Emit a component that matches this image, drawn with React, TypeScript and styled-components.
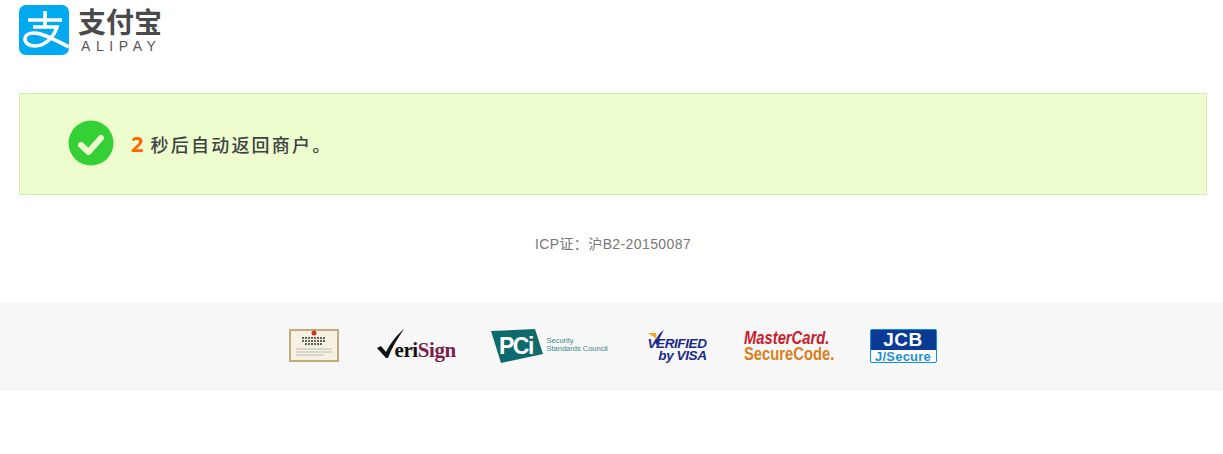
import { FC } from 'react'
import styled, { createGlobalStyle } from 'styled-components'

const GlobalStyle = createGlobalStyle`
  html, body {
    margin: 0;
    padding: 0;
    background: #fff;
    font-family: "Liberation Sans", "Noto Sans CJK SC", sans-serif;
  }
`

const Page = styled.div`
  width: 1223px;
  height: 454px;
  overflow: hidden;
`

const Header = styled.header`
  display: flex;
  align-items: flex-start;
  gap: 9px;
  height: 93px;
  padding: 5px 0 0 19px;
  box-sizing: border-box;
`

const Wordmark = styled.div`
  display: flex;
  flex-direction: column;
  width: 86px;
  color: #4a4a4a;
`

const WordmarkCn = styled.span`
  font-family: "Noto Sans CJK SC", sans-serif;
  font-size: 28px;
  font-weight: 700;
  line-height: 30px;
  margin-top: 1px;
`

const WordmarkEn = styled.span`
  font-family: "Liberation Sans", sans-serif;
  font-size: 14px;
  line-height: 14px;
  letter-spacing: 5.6px;
  margin-top: 3px;
  padding-left: 3px;
  white-space: nowrap;
  color: #555;
`

const Notice = styled.section`
  display: flex;
  align-items: center;
  height: 102px;
  margin: 0 16px 0 19px;
  padding: 0 0 2px 48px;
  box-sizing: border-box;
  background: #edfdcd;
  border: 1px solid #d7e8b4;
`

const NoticeText = styled.p`
  margin: 0 0 0 17px;
  font-family: "Noto Sans CJK SC", serif;
  font-size: 18px;
  font-weight: 500;
  letter-spacing: 2.2px;
  color: #3e4246;
`

const Countdown = styled.strong`
  font-family: "Open Sans", sans-serif;
  font-size: 22px;
  font-weight: 700;
  letter-spacing: 0;
  color: #ff6600;
  margin-right: 7px;
`

const Icp = styled.div`
  height: 108px;
  padding: 40px 0 0 3px;
  box-sizing: border-box;
  text-align: center;
  font-size: 14px;
  line-height: 18px;
  letter-spacing: 0.4px;
  color: #777;
`

const Footer = styled.footer`
  display: flex;
  align-items: center;
  justify-content: center;
  gap: 37px;
  height: 88px;
  padding: 0 0 3px 2px;
  box-sizing: border-box;
  background: #f7f7f7;
`

const Badge = styled.div<{ $w: number }>`
  position: relative;
  flex: none;
  width: ${p => p.$w}px;
  height: 36px;
  display: flex;
  align-items: center;
`

const VeriSignText = styled.span`
  font-family: "Liberation Serif", serif;
  font-size: 21px;
  font-weight: 700;
  letter-spacing: -0.4px;
  color: #111;
  padding-left: 18px;
  padding-top: 9px;
  b {
    font-weight: 700;
    color: #7a1f4a;
  }
`

const PciBlock = styled.div`
  display: flex;
  align-items: center;
  gap: 2px;
  margin-left: -1px;
`

const PciText = styled.span`
  font-size: 7.5px;
  line-height: 8.5px;
  color: #3a8a8e;
  white-space: nowrap;
  margin-top: -1px;
`

const VisaStack = styled.div`
  display: flex;
  flex-direction: column;
  align-items: flex-end;
  align-self: flex-start;
  width: 100%;
  font-weight: 700;
  font-style: italic;
  color: #1a2a8c;
  font-size: 13.5px;
  line-height: 12px;
  letter-spacing: -0.4px;
  padding-top: 10px;
`

const McStack = styled.div`
  display: flex;
  flex-direction: column;
  width: 100%;
  font-weight: 700;
  font-size: 18px;
  line-height: 16px;
  white-space: nowrap;
  transform: scaleX(0.82);
  transform-origin: left center;
`

const McTop = styled.span`
  color: #c8202c;
  font-style: italic;
`

const McBottom = styled.span`
  color: #d8801c;
`

const JcbCard = styled.div`
  display: flex;
  flex-direction: column;
  width: 67px;
  height: 34px;
  box-sizing: border-box;
  border: 1px solid #0d8fdc;
  border-radius: 2px;
  background: #fff;
  font-weight: 700;
  text-align: center;
`

const JcbTop = styled.span`
  height: 20px;
  background: #0a3a96;
  color: #fff;
  font-size: 19px;
  letter-spacing: 0.5px;
  line-height: 20px;
`

const JcbBottom = styled.span`
  color: #1b8fd8;
  font-size: 13px;
  line-height: 13px;
  letter-spacing: 0.2px;
`

const Logo: FC = () => (
  <svg width="50" height="50" viewBox="0 0 50 50">
    <rect width="50" height="50" rx="7" fill="#00a9f0" />
    <path d="M9 15h34M26 6v16M14 22h24C35 32 26 41 16 41 10 41 6 38 6 34 6 30 10 28 15 28 24 28 36 35 50 42"
      fill="none" stroke="#fff" strokeWidth="3.6" />
  </svg>
)

const CheckIcon: FC = () => (
  <svg width="46" height="46" viewBox="0 0 46 46">
    <circle cx="23" cy="23" r="22.5" fill="#35d035" />
    <path d="M13 25l7.5 7L33 18" fill="none" stroke="#ecfad0" strokeWidth="6" strokeLinecap="round" strokeLinejoin="round" />
  </svg>
)

const Certificate: FC = () => (
  <svg width="50" height="33" viewBox="0 0 50 33">
    <rect width="50" height="33" fill="#c2ab7c" />
    <rect x="2" y="2" width="46" height="29" fill="#f6f1e2" />
    <circle cx="25" cy="4" r="2.5" fill="#c8352a" />
    <path d="M13 9h24M13 12h24M16 15h18" stroke="#333" strokeWidth="1.4" strokeDasharray="2 1" />
    <path d="M7 20h36M7 23h36M7 26h28" stroke="#bbb" strokeWidth="1" />
  </svg>
)

const CheckTick: FC = () => (
  <svg width="28" height="30" viewBox="0 0 28 30" style={{ position: 'absolute', left: 0, top: 1 }}>
    <path d="M0 19l4-2 5 6C14 13 20 6 27 0 21 9 15 18 11 29H9z" fill="#111" />
  </svg>
)

const PciMark: FC = () => (
  <svg width="54" height="34" viewBox="0 0 54 34">
    <path d="M0 2L44 0l8 25-42 9z" fill="#0f6a6e" />
    <text x="8" y="25" fontFamily="Liberation Sans" fontWeight="700" fontSize="23" letterSpacing="-1.5" fill="#fff">PCi</text>
  </svg>
)

const VisaTick: FC = () => (
  <svg width="20" height="20" viewBox="0 0 20 20" style={{ position: 'absolute', left: 1, top: 1 }}>
    <path d="M1 4h8l1 6z" fill="#f0a820" />
    <path d="M8 14C10 8 12 4 17 1 14 6 12 10 10 16z" fill="#1a2a8c" />
  </svg>
)

const App: FC = () => (
  <Page>
    <GlobalStyle />
    <Header>
      <Logo />
      <Wordmark>
        <WordmarkCn>支付宝</WordmarkCn>
        <WordmarkEn>ALIPAY</WordmarkEn>
      </Wordmark>
    </Header>
    <Notice>
      <CheckIcon />
      <NoticeText><Countdown>2</Countdown>秒后自动返回商户。</NoticeText>
    </Notice>
    <Icp>ICP证：沪B2-20150087</Icp>
    <Footer>
      <Badge $w={51}><Certificate /></Badge>
      <Badge $w={78}>
        <CheckTick />
        <VeriSignText>eri<b>Sign</b></VeriSignText>
      </Badge>
      <Badge $w={117}>
        <PciBlock>
          <PciMark />
          <PciText>Security<br />Standards Council</PciText>
        </PciBlock>
      </Badge>
      <Badge $w={61}>
        <VisaTick />
        <VisaStack><span>VERIFIED</span><span>by VISA</span></VisaStack>
      </Badge>
      <Badge $w={89}>
        <McStack><McTop>MasterCard.</McTop><McBottom>SecureCode.</McBottom></McStack>
      </Badge>
      <Badge $w={67}>
        <JcbCard><JcbTop>JCB</JcbTop><JcbBottom>J/Secure</JcbBottom></JcbCard>
      </Badge>
    </Footer>
  </Page>
)

export default App
